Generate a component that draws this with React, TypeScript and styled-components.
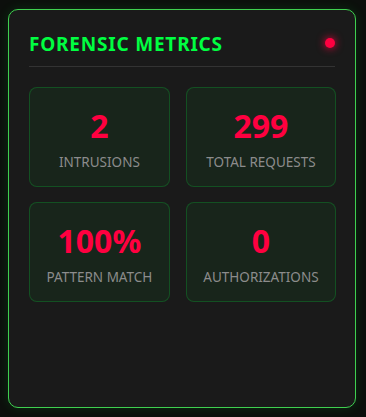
import styled, { createGlobalStyle } from "styled-components";

const GlobalStyle = createGlobalStyle`
  html, body {
    margin: 0;
    padding: 0;
    background: #0c0f0c;
  }
  body {
    font-family: "Noto Sans", "Open Sans", sans-serif;
  }
`;

const Page = styled.div`
  width: 366px;
  height: 417px;
  padding: 9px 10px 9px 8px;
  box-sizing: border-box;
`;

const Panel = styled.section`
  height: 100%;
  box-sizing: border-box;
  background: #1a1a1a;
  border: 1px solid #3fd04f;
  border-radius: 10px;
  box-shadow: 0 0 12px rgba(0, 255, 65, 0.12);
  padding: 20px;
`;

const Header = styled.div`
  display: flex;
  align-items: center;
  justify-content: space-between;
  padding-bottom: 7px;
  border-bottom: 1px solid #333;
  margin-bottom: 20px;
`;

const Title = styled.h2`
  margin: 0;
  color: #00ff41;
  font-size: 19px;
  font-weight: 700;
  letter-spacing: 0.8px;
  line-height: 29px;
  text-transform: uppercase;
`;

const StatusDot = styled.span`
  width: 10px;
  height: 10px;
  border-radius: 50%;
  background: #ff0040;
  box-shadow: 0 0 8px #ff0040;
  margin-bottom: 3px;
`;

const Grid = styled.div`
  display: grid;
  grid-template-columns: 1fr 1fr;
  gap: 15px 16px;
`;

const Card = styled.div`
  height: 100px;
  box-sizing: border-box;
  padding: 3px 16.5px 0;
  background: rgba(0, 255, 65, 0.05);
  border: 1px solid rgba(0, 255, 65, 0.2);
  border-radius: 8px;
  display: flex;
  flex-direction: column;
  align-items: center;
  justify-content: center;
  gap: 8px;
`;

const Value = styled.div`
  color: #ff0040;
  font-size: 32px;
  font-weight: 700;
  line-height: 38px;
`;

const Label = styled.div`
  color: #8c8c8c;
  font-size: 13.5px;
  line-height: 18px;
  white-space: nowrap;
  text-transform: uppercase;
`;

const metrics = [
  { value: "2", label: "Intrusions" },
  { value: "299", label: "Total Requests" },
  { value: "100%", label: "Pattern Match" },
  { value: "0", label: "Authorizations" },
];

export default function App() {
  return (
    <>
      <GlobalStyle />
      <Page>
        <Panel>
          <Header>
            <Title>Forensic Metrics</Title>
            <StatusDot />
          </Header>
          <Grid>
            {metrics.map((m) => (
              <Card key={m.label}>
                <Value>{m.value}</Value>
                <Label>{m.label}</Label>
              </Card>
            ))}
          </Grid>
        </Panel>
      </Page>
    </>
  );
}
